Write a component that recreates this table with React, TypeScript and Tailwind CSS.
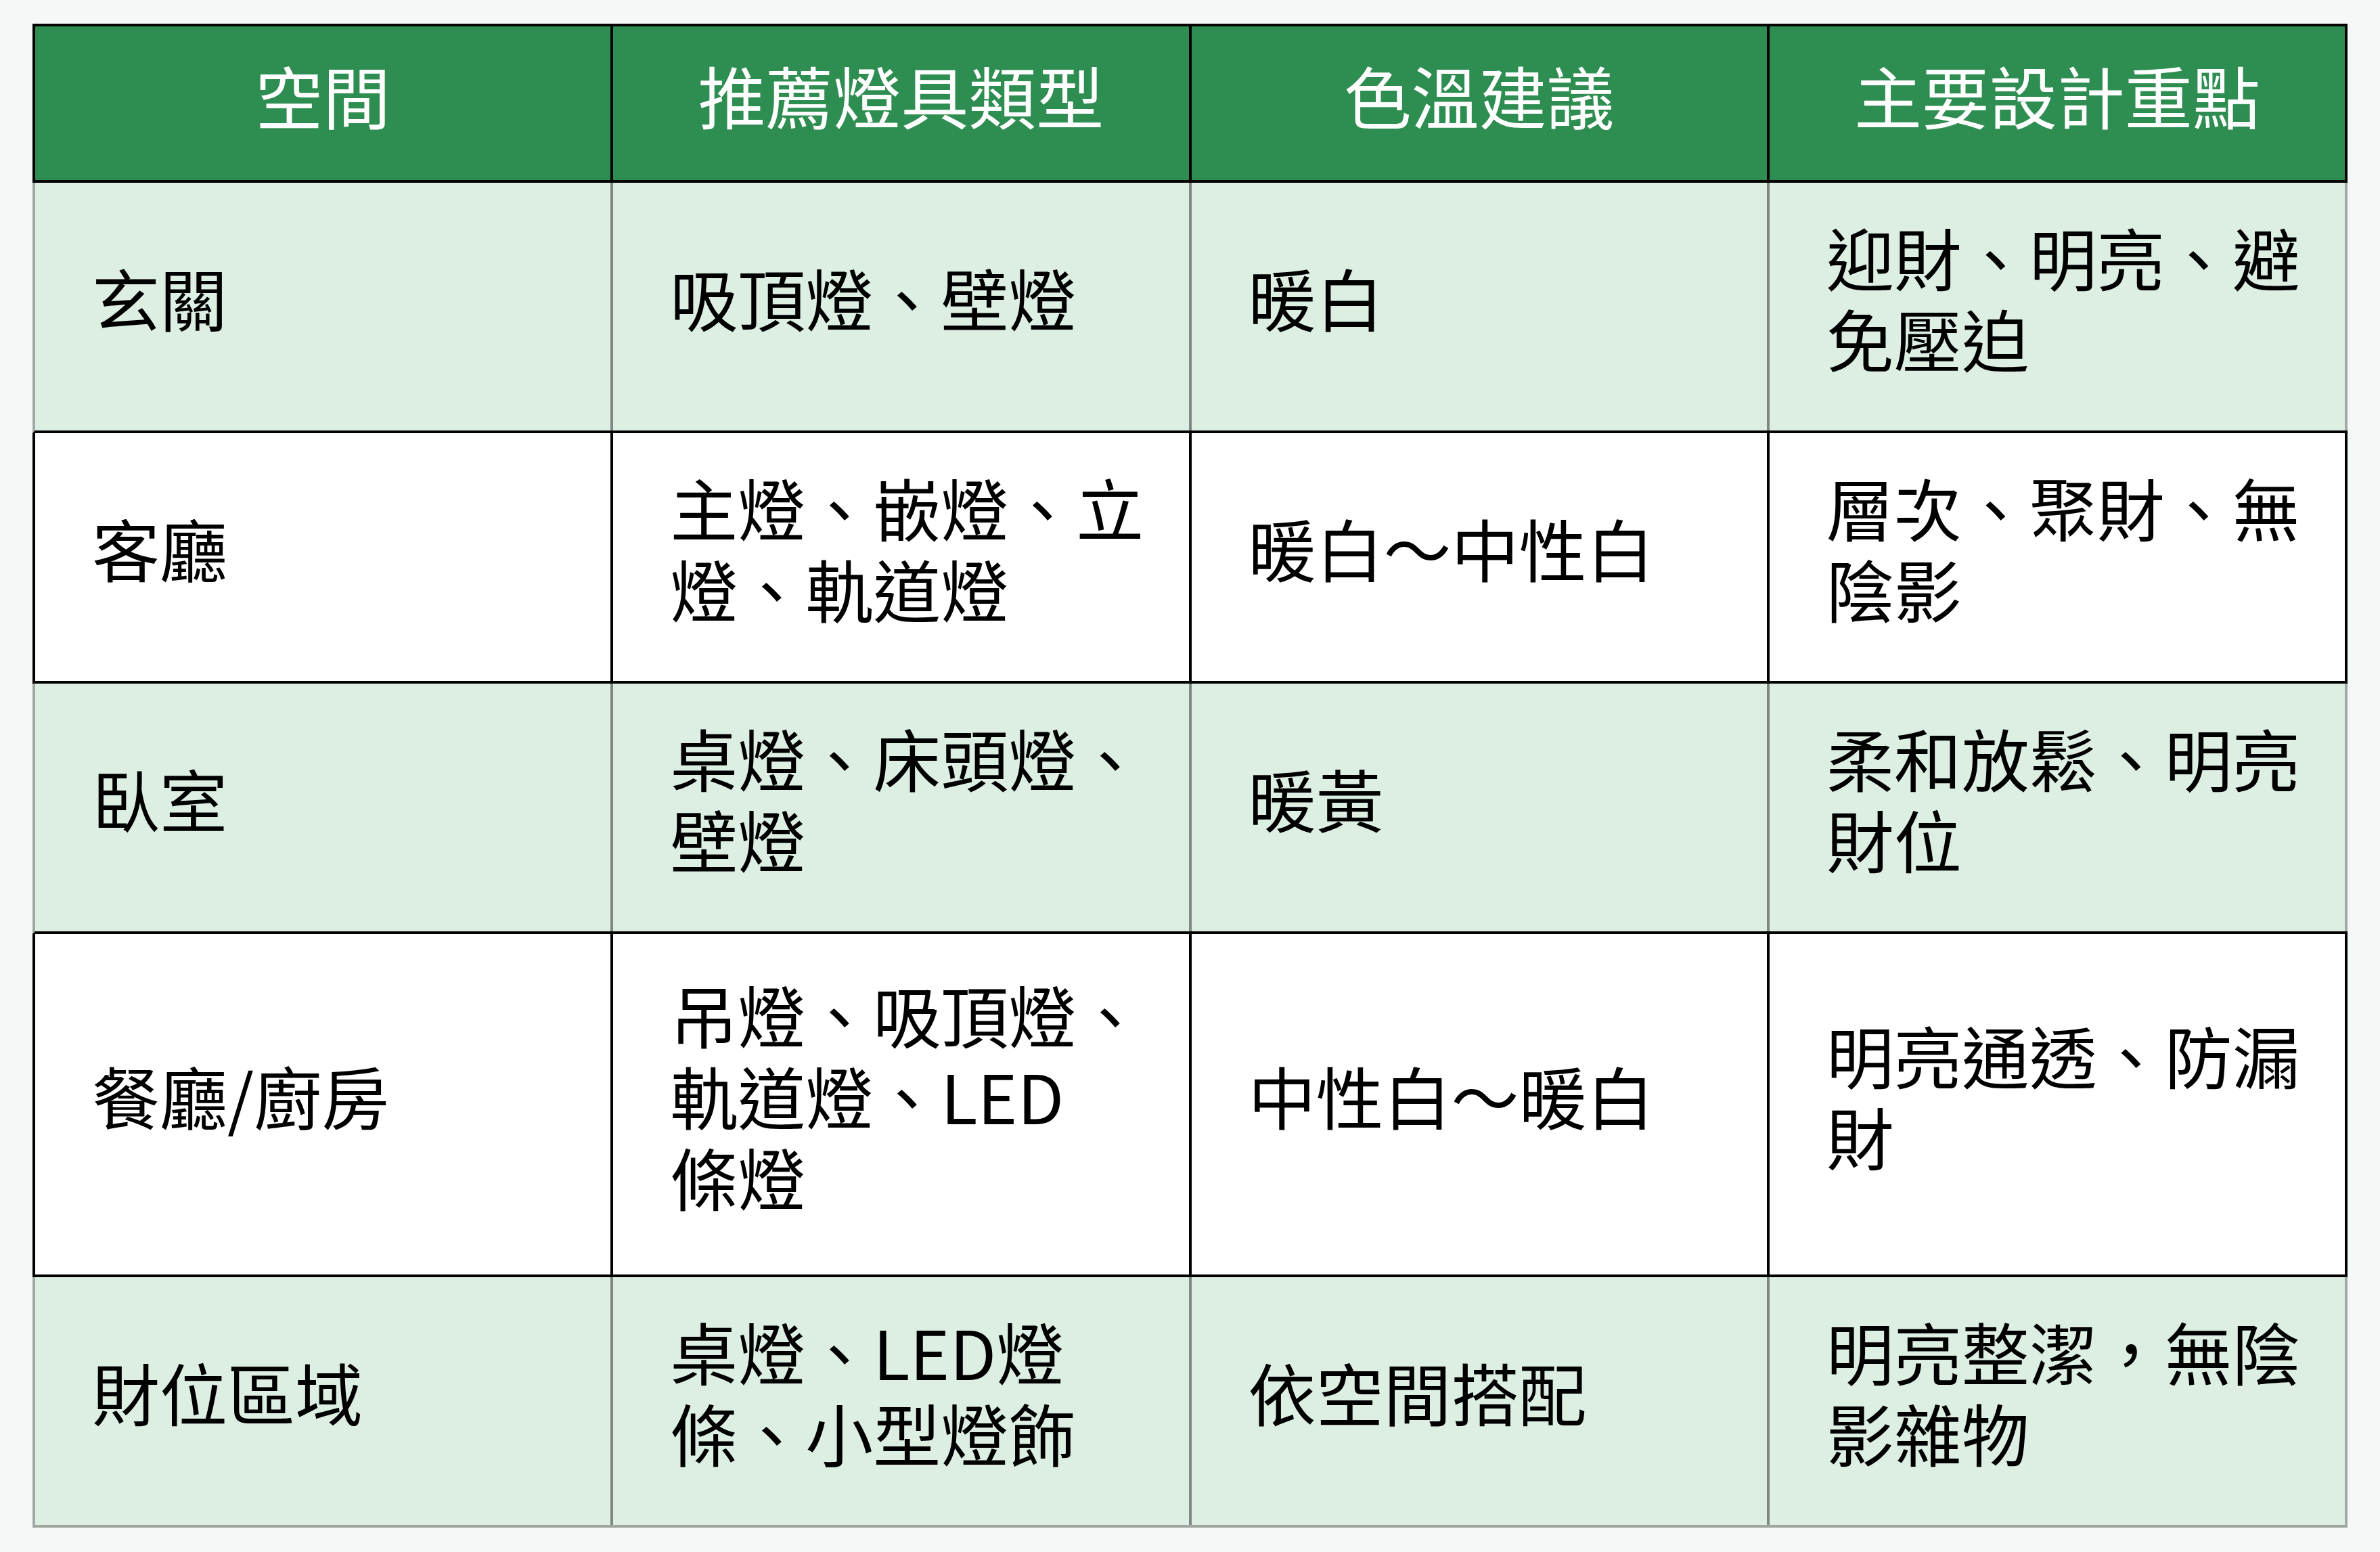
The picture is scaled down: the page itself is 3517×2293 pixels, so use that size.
const headers = ['空間', '推薦燈具類型', '色溫建議', '主要設計重點'];

type Row = { cells: string[][]; tint: boolean; tall?: boolean };

// each cell is a list of lines, wrapped as in the source table
const rows: Row[] = [
  {
    tint: true,
    cells: [['玄關'], ['吸頂燈、壁燈'], ['暖白'], ['迎財、明亮、避', '免壓迫']],
  },
  {
    tint: false,
    cells: [['客廳'], ['主燈、嵌燈、立', '燈、軌道燈'], ['暖白～中性白'], ['層次、聚財、無', '陰影']],
  },
  {
    tint: true,
    cells: [['臥室'], ['桌燈、床頭燈、', '壁燈'], ['暖黃'], ['柔和放鬆、明亮', '財位']],
  },
  {
    tint: false,
    tall: true,
    cells: [['餐廳/廚房'], ['吊燈、吸頂燈、', '軌道燈、LED', '條燈'], ['中性白～暖白'], ['明亮通透、防漏', '財']],
  },
  {
    tint: true,
    cells: [['財位區域'], ['桌燈、LED燈', '條、小型燈飾'], ['依空間搭配'], ['明亮整潔，無陰', '影雜物']],
  },
];

function Cell({ lines, tint, last }: { lines: string[]; tint: boolean; last: boolean }) {
  let edge = 'border-black';
  if (tint) edge = last ? 'border-[#a3aaa5]' : 'border-[#7e8782]';
  return (
    <div className={`flex items-center border-r-4 ${edge} pl-[84px] pr-[30px] pb-[28px]`}>
      <div className="text-[100px] leading-[120px] text-black whitespace-nowrap">
        {lines.map((l) => (
          <div key={l}>{l}</div>
        ))}
      </div>
    </div>
  );
}

export default function App() {
  return (
    <div
      className="min-h-screen bg-[#f4f8f7] px-[48px] pt-[35px] pb-[36px]"
      style={{ fontFamily: '"Noto Sans CJK TC", "Noto Sans", sans-serif' }}
    >
      <div className="flex flex-col">
        <div className="grid h-[235px] grid-cols-4 border-4 border-r-0 border-black bg-[#2e8d50]">
          {headers.map((h) => (
            <div
              key={h}
              className="flex items-center justify-center border-r-4 border-black pb-[26px] text-[100px] leading-[120px] text-white"
            >
              {h}
            </div>
          ))}
        </div>
        {rows.map((row, i) => {
          const lastRow = i === rows.length - 1;
          const left = row.tint ? 'border-l-[#a3aaa5]' : 'border-l-black';
          const bottom = lastRow ? 'border-b-[#9ea69f]' : 'border-b-black';
          return (
            <div
              key={i}
              className={`grid grid-cols-4 border-l-4 border-b-4 ${left} ${bottom} ${
                row.tint ? 'bg-[#dcefe2]' : 'bg-white'
              } ${row.tall ? 'h-[507px]' : 'h-[370px]'}`}
            >
              {row.cells.map((c, j) => (
                <Cell key={j} lines={c} tint={row.tint} last={j === 3} />
              ))}
            </div>
          );
        })}
      </div>
    </div>
  );
}
